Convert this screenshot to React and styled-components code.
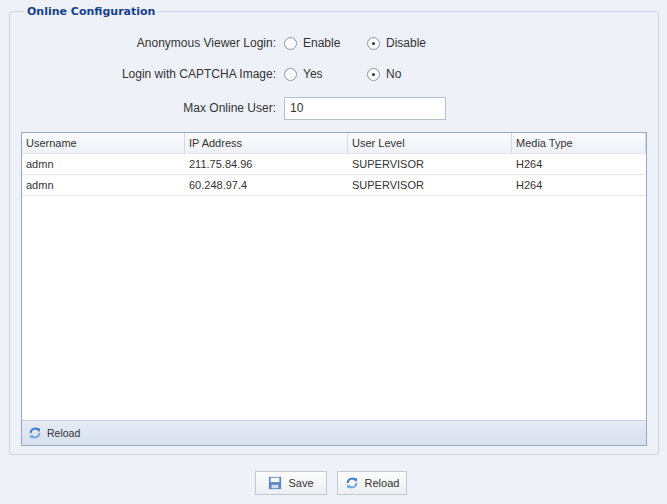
import React from "react";
import styled, { createGlobalStyle } from "styled-components";

const Global = createGlobalStyle`
  html, body { margin: 0; padding: 0; background: #eef1f8; }
  body { font-family: "Liberation Sans", Arial, sans-serif; font-size: 11px; color: #333; }
`;

const Page = styled.div`
  width: 667px; height: 504px; box-sizing: border-box;
  padding: 5px 8px 0 9px; display: flex; flex-direction: column;
`;

const Fieldset = styled.fieldset`
  margin: 0; border: 1px solid #cdd3e0; border-radius: 3px;
  padding: 0 11px 10px 11px; height: 450px; box-sizing: border-box;
  legend { font-weight: bold; color: #15428b; font-size: 11px; padding: 0 3px; margin-left: 3px; font-family: Tahoma, "DejaVu Sans", sans-serif; }
`;

const Inner = styled.div`
  height: 428px; display: flex; flex-direction: column; padding-top: 10px; box-sizing: border-box;
`;

const Row = styled.div`
  display: grid; grid-template-columns: 263px auto; align-items: center;
  height: ${p => p.h}px;
`;

const Label = styled.div`
  text-align: right; padding-right: 8px; font-size: 12px; color: #333;
`;

const Radios = styled.div`display: flex; align-items: center;`;

const RadioItem = styled.label`
  display: flex; align-items: center; gap: 6px; width: ${p => p.w}px; font-size: 12px;
`;

const Circle = styled.span`
  width: 11px; height: 11px; border-radius: 50%; border: 1px solid #8a96a8;
  background: #fff; display: flex; align-items: center; justify-content: center;
  &::after { content: ""; width: 3px; height: 3px; border-radius: 50%; background: ${p => (p.on ? "#333" : "transparent")}; }
`;

const Input = styled.div`
  width: 155px; height: 21px; border: 1px solid #b5bfd0; background: #fff;
  padding-left: 5px; line-height: 21px; font-size: 12px;
`;

const Grid = styled.div`
  margin-top: 6px; flex: 1; border: 1px solid #99a8c0; background: #fff;
  display: flex; flex-direction: column;
`;

const Cols = styled.div`
  display: grid; grid-template-columns: 163px 163px 164px 1fr;
  height: 20px; align-items: center; font-size: 11px;
  background: ${p => (p.head ? "linear-gradient(#fafbfd,#eef1f6)" : "#fff")};
  border-bottom: 1px solid #e4e7ee;
  & > div {
    padding-left: 4px; height: 100%; display: flex; align-items: center;
    border-right: ${p => (p.head ? "1px solid #d4d8e2" : "none")};
  }
`;

const Body = styled.div`flex: 1;`;

const Toolbar = styled.div`
  height: 24px; background: linear-gradient(#e6ebf5,#d8e0ee); border-top: 1px solid #c5cfe0;
  display: flex; align-items: center; padding-left: 6px; gap: 5px; font-size: 10.5px;
`;

const Buttons = styled.div`
  display: flex; justify-content: center; gap: 10px; margin-top: 16px; padding-right: 6px;
`;

const Button = styled.div`
  height: 22px; width: ${p => p.w}px; border: 1px solid #c4c8d0; background: linear-gradient(#fdfdfd,#eceef2);
  display: flex; align-items: center; justify-content: center; gap: 6px; font-size: 11px;
`;

const ReloadIcon = () => (
  <svg width="14" height="14" viewBox="0 0 16 16">
    <path d="M3 8a5 5 0 0 1 9-3" fill="none" stroke="#3a7bd5" strokeWidth="2.2" />
    <path d="M10 2l4 1-1 4z" fill="#3a7bd5" />
    <path d="M13 8a5 5 0 0 1-9 3" fill="none" stroke="#6fa8e8" strokeWidth="2.2" />
    <path d="M6 14l-4-1 1-4z" fill="#6fa8e8" />
  </svg>
);

const SaveIcon = () => (
  <svg width="14" height="14" viewBox="0 0 16 16">
    <rect x="1" y="1" width="14" height="14" fill="#5a86c4" />
    <rect x="3" y="2" width="10" height="5" fill="#fff" />
    <rect x="4" y="10" width="8" height="4" fill="#cfdcf0" />
  </svg>
);

const rows = [
  ["admn", "211.75.84.96", "SUPERVISOR", "H264"],
  ["admn", "60.248.97.4", "SUPERVISOR", "H264"],
];

export default function App() {
  return (
    <Page>
      <Global />
      <Fieldset>
        <legend>Online Configuration</legend>
        <Inner>
          <Row h={30}>
            <Label>Anonymous Viewer Login:</Label>
            <Radios>
              <RadioItem w={83}><Circle />Enable</RadioItem>
              <RadioItem w={80}><Circle on />Disable</RadioItem>
            </Radios>
          </Row>
          <Row h={32}>
            <Label>Login with CAPTCHA Image:</Label>
            <Radios>
              <RadioItem w={83}><Circle />Yes</RadioItem>
              <RadioItem w={80}><Circle on />No</RadioItem>
            </Radios>
          </Row>
          <Row h={36}>
            <Label>Max Online User:</Label>
            <Input>10</Input>
          </Row>
          <Grid>
            <Cols head>
              <div>Username</div><div>IP Address</div><div>User Level</div><div>Media Type</div>
            </Cols>
            <Body>
              {rows.map((r, i) => (
                <Cols key={i}>{r.map((c, j) => <div key={j}>{c}</div>)}</Cols>
              ))}
            </Body>
            <Toolbar><ReloadIcon />Reload</Toolbar>
          </Grid>
        </Inner>
      </Fieldset>
      <Buttons>
        <Button w={70}><SaveIcon />Save</Button>
        <Button w={68}><ReloadIcon />Reload</Button>
      </Buttons>
    </Page>
  );
}
